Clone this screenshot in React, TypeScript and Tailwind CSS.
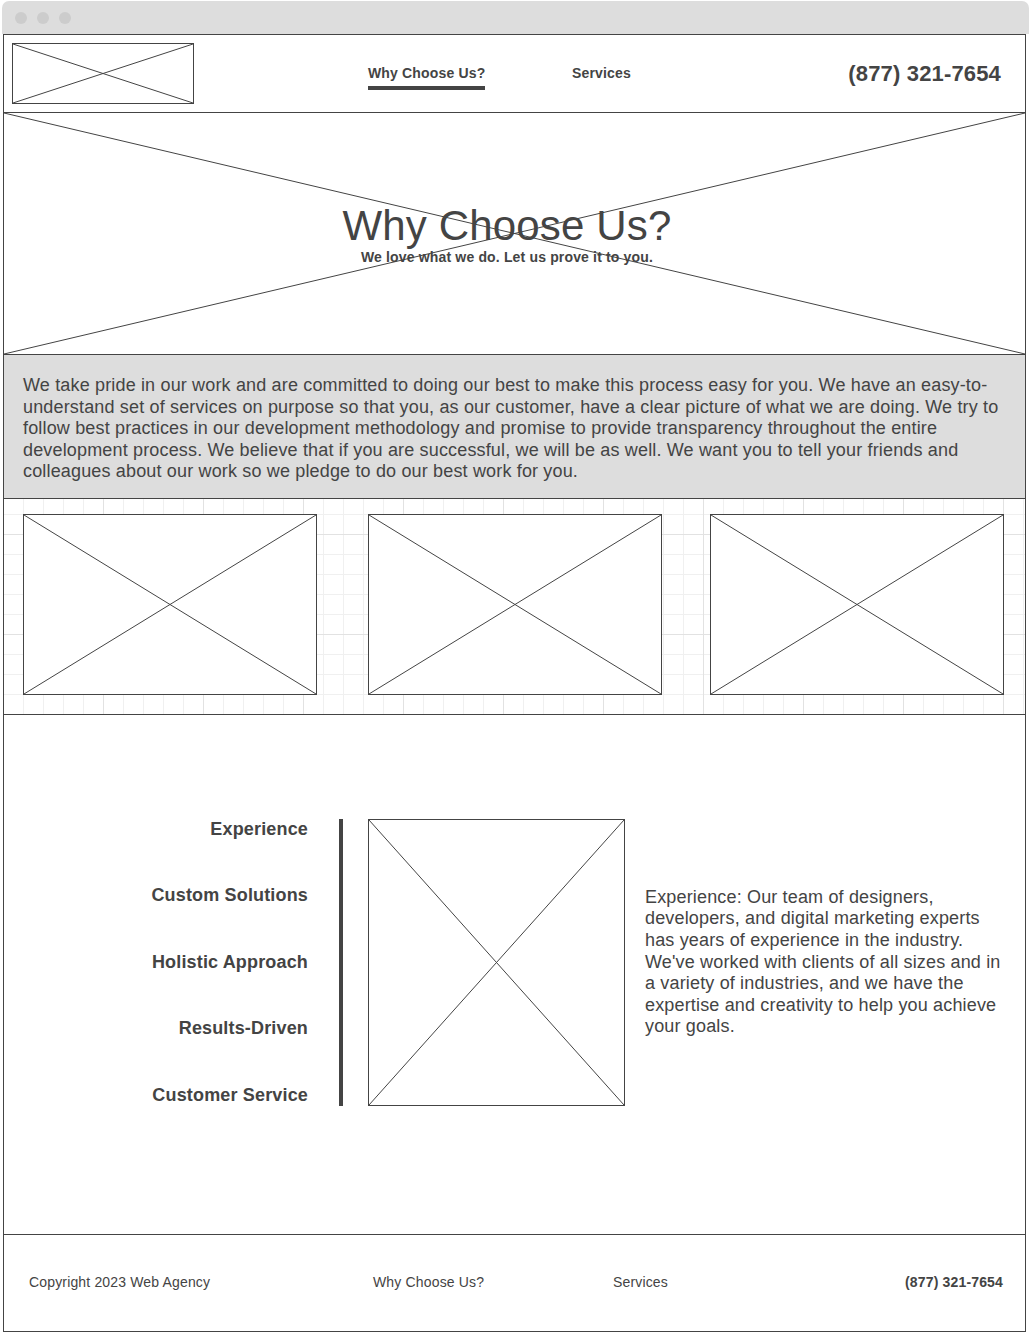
const font = { fontFamily: '"Liberation Sans", Arial, sans-serif' };

const Cross = () => (
  <svg className="block h-full w-full" viewBox="0 0 100 100" preserveAspectRatio="none">
    <line x1="0" y1="0" x2="100" y2="100" stroke="#444" strokeWidth="1" vectorEffect="non-scaling-stroke" />
    <line x1="100" y1="0" x2="0" y2="100" stroke="#444" strokeWidth="1" vectorEffect="non-scaling-stroke" />
  </svg>
);

type BoxProps = { className?: string };

const Placeholder = ({ className = "" }: BoxProps) => (
  <div className={`border border-[#444] bg-white ${className}`}>
    <Cross />
  </div>
);

const reasons = [
  "Experience",
  "Custom Solutions",
  "Holistic Approach",
  "Results-Driven",
  "Customer Service",
];

export default function App() {
  return (
    <div className="min-h-[1333px] bg-white pt-px tracking-[0.01em] text-[#444]" style={font}>
      {/* window chrome */}
      <div className="mx-[2px] flex h-[33px] items-center gap-[10px] rounded-t-[7px] bg-[#dddddd] pl-[13px]">
        <span className="h-[12px] w-[12px] rounded-full bg-[#cccccc]" />
        <span className="h-[12px] w-[12px] rounded-full bg-[#cccccc]" />
        <span className="h-[12px] w-[12px] rounded-full bg-[#cccccc]" />
      </div>

      <div className="ml-[3px] w-[1023px] border border-[#444] bg-white bg-[linear-gradient(to_left,#e2e2e2_1px,transparent_1px),linear-gradient(to_top,#e2e2e2_1px,transparent_1px),linear-gradient(to_left,#f0f0f0_1px,transparent_1px),linear-gradient(to_top,#f0f0f0_1px,transparent_1px)] bg-size-[100px_100px,100px_100px,20px_20px,20px_20px]">
        {/* header */}
        <header className="flex h-[78px] items-center border-b border-[#444] bg-white pl-[8px]">
          <Placeholder className="h-[61px] w-[182px]" />
          <nav className="ml-[174px] flex items-center">
            <div className="w-[204px]">
              <a className="mb-[1px] inline-block border-b-4 border-[#444] pt-[8px] pb-[5px] text-[14px] leading-4 font-bold">
                Why Choose Us?
              </a>
            </div>
            <a className="mb-[1px] inline-block border-b-4 border-transparent pt-[8px] pb-[5px] text-[14px] leading-4 font-bold">
              Services
            </a>
          </nav>
          <div className="ml-auto pr-[24px] text-[22px] leading-6 font-bold">(877) 321-7654</div>
        </header>

        {/* hero */}
        <section className="relative h-[242px] border-b border-[#444] bg-white">
          <div className="absolute inset-0">
            <Cross />
          </div>
          <div className="relative flex flex-col items-center pt-[89px] pr-[15px]">
            <h1 className="text-[42px] leading-[47px]">Why Choose Us?</h1>
            <p className="text-[14px] leading-4 font-bold">We love what we do. Let us prove it to you.</p>
          </div>
        </section>

        {/* intro */}
        <section className="border-b border-[#444] bg-[#dddddd] px-[19px] pt-[20px] pb-[15px] text-[18px] leading-[21.6px]">
          We take pride in our work and are committed to doing our best to make this process easy for you. We have an
          easy-to-understand set of services on purpose so that you, as our customer, have a clear picture of what we
          are doing. We try to follow best practices in our development methodology and promise to provide
          transparency throughout the entire development process. We believe that if you are successful, we will be as
          well. We want you to tell your friends and colleagues about our work so we pledge to do our best work for you.
        </section>

        {/* image row */}
        <section className="flex pt-[15px] pb-[19px] pl-[19px]">
          <Placeholder className="h-[181px] w-[294px]" />
          <Placeholder className="ml-[51px] h-[181px] w-[294px]" />
          <Placeholder className="ml-[48px] h-[181px] w-[294px]" />
        </section>

        {/* reasons */}
        <section className="flex items-stretch border-t border-b border-[#444] bg-white pt-[104px] pb-[128px]">
          <ul className="flex h-[287px] w-[304px] flex-col justify-between pb-px text-right text-[18px] leading-[20px] font-bold">
            {reasons.map((r) => (
              <li key={r}>{r}</li>
            ))}
          </ul>
          <div className="ml-[31px] h-[287px] w-[4px] bg-[#444]" />
          <Placeholder className="ml-[25px] h-[287px] w-[257px]" />
          <div className="ml-[20px] flex w-[362px] items-center text-[18px] leading-[21.6px]">
            <p>
              Experience: Our team of designers, developers, and digital marketing experts has years of experience in
              the industry. We've worked with clients of all sizes and in a variety of industries, and we have the
              expertise and creativity to help you achieve your goals.
            </p>
          </div>
        </section>

        {/* footer */}
        <footer className="flex h-[96px] items-center bg-white pl-[25px] pr-[22px] pb-[2px] text-[14px] leading-4">
          <span className="w-[344px]">Copyright 2023 Web Agency</span>
          <span className="w-[240px]">Why Choose Us?</span>
          <span>Services</span>
          <span className="ml-auto font-bold">(877) 321-7654</span>
        </footer>
      </div>
    </div>
  );
}
